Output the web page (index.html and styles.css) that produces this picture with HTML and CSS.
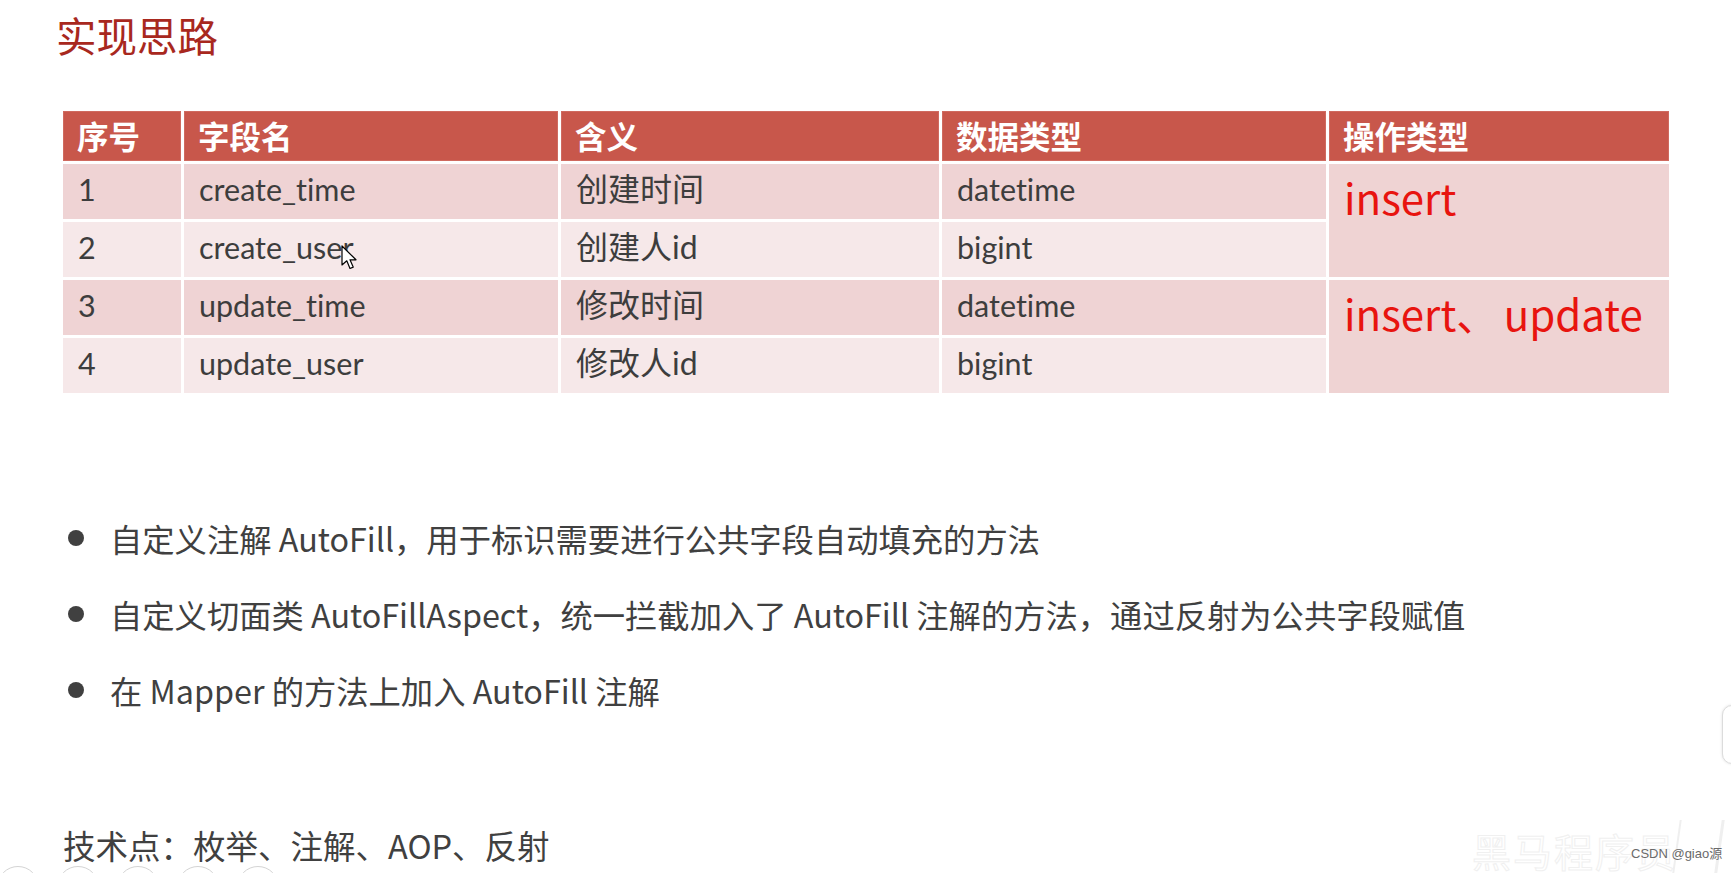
FILE: index.html
```html
<!DOCTYPE html>
<html lang="zh-CN">
<head>
<meta charset="utf-8">
<title>实现思路</title>
<link rel="stylesheet" href="styles.css">
</head>
<body>
<div class="slide">
  <h1 class="title">实现思路</h1>

  <div class="table">
    <div class="th">序号</div>
    <div class="th">字段名</div>
    <div class="th">含义</div>
    <div class="th">数据类型</div>
    <div class="th">操作类型</div>

    <div class="td odd">1</div>
    <div class="td odd">create_time</div>
    <div class="td odd cn">创建时间</div>
    <div class="td odd">datetime</div>
    <div class="td op op1">insert</div>

    <div class="td even">2</div>
    <div class="td even">create_user</div>
    <div class="td even cn">创建人id</div>
    <div class="td even">bigint</div>

    <div class="td odd">3</div>
    <div class="td odd">update_time</div>
    <div class="td odd cn">修改时间</div>
    <div class="td odd">datetime</div>
    <div class="td op op2">insert、 update</div>

    <div class="td even">4</div>
    <div class="td even">update_user</div>
    <div class="td even cn">修改人id</div>
    <div class="td even">bigint</div>
  </div>

  <ul class="points">
    <li><span class="dot"></span><span>自定义注解 AutoFill，用于标识需要进行公共字段自动填充的方法</span></li>
    <li><span class="dot"></span><span>自定义切面类 AutoFillAspect，统一拦截加入了 AutoFill 注解的方法，通过反射为公共字段赋值</span></li>
    <li><span class="dot"></span><span>在 Mapper 的方法上加入 AutoFill 注解</span></li>
  </ul>

  <p class="tech">技术点：枚举、注解、AOP、反射</p>
</div>

<svg class="cursor" width="18" height="28" viewBox="0 0 18 28" aria-hidden="true">
  <path d="M1 1 L1 20 L5.8 15.8 L9 23.5 L12.2 22.1 L9 14.8 L15 14.8 Z" fill="#fff" stroke="#000" stroke-width="1.2" stroke-linejoin="round"/>
</svg>

<div class="side-btn"></div>

<div class="controls">
  <span class="ctl c1"></span>
  <span class="ctl c2"></span>
  <span class="ctl c3"></span>
  <span class="ctl c4"></span>
  <span class="ctl c5"></span>
</div>

<div class="wm-logo">黑马程序员</div>
<div class="wm-lines"></div>
<div class="wm-csdn">CSDN @giao源</div>
</body>
</html>
```

FILE: styles.css
```css
html, body {
  margin: 0;
  padding: 0;
  background: #ffffff;
}

body {
  width: 1731px;
  height: 873px;
  overflow: hidden;
  position: relative;
  font-family: "Noto Sans CJK SC", "Noto Sans", sans-serif;
  color: #404040;
}

.slide {
  display: flex;
  flex-direction: column;
  padding-top: 10px;
}

.title {
  margin: 0 0 0 56px;
  font-size: 40.5px;
  line-height: 50px;
  font-weight: normal;
  color: #a8281e;
}

.table {
  margin: 51px 0 0 63px;
  width: 1606px;
  display: grid;
  grid-template-columns: 118px 374px 378px 384px 340px;
  grid-template-rows: 50px 55px 55px 55px 55px;
  gap: 3px;
}

.th {
  background: #c8574b;
  color: #ffffff;
  font-weight: bold;
  font-size: 31.5px;
  line-height: 48px;
  padding-left: 14px;
  box-shadow: inset 0 0 0 1px #cf6a5f;
}

.td {
  font-family: "Lato", "Noto Sans CJK SC", sans-serif;
  font-size: 30.5px;
  line-height: 50px;
  padding-left: 15px;
  color: #3d3d3d;
  font-variant-ligatures: none;
}

.td.cn {
  font-size: 32px;
  line-height: 50px;
}

.td.odd {
  background: #efd3d4;
}

.td.even {
  background: #f6e8e9;
}

.td.op {
  font-family: "Noto Sans CJK SC", sans-serif;
  background: #efd3d3;
  color: #e8140f;
  font-size: 42px;
  line-height: 58px;
  padding-top: 4px;
  grid-column: 5;
  word-spacing: -4px;
}

.td.op1 {
  grid-row: 2 / span 2;
}

.td.op2 {
  grid-row: 4 / span 2;
}

.points {
  list-style: none;
  margin: 107px 0 0 0;
  padding: 0 0 0 68px;
  display: flex;
  flex-direction: column;
}

.points li {
  display: flex;
  align-items: center;
  gap: 26px;
  height: 76px;
  font-size: 32.3px;
  color: #404040;
}

.dot {
  flex: none;
  width: 16px;
  height: 16px;
  border-radius: 50%;
  background: #404040;
}

.tech {
  margin: 93px 0 0 63px;
  font-size: 32.5px;
  line-height: 48px;
  color: #404040;
}

/* overlays */
.cursor {
  position: absolute;
  left: 341px;
  top: 245px;
}

.side-btn {
  position: absolute;
  left: 1722px;
  top: 705px;
  width: 40px;
  height: 57px;
  border: 1px solid #dcdcdc;
  border-radius: 10px;
  background: #ffffff;
  box-shadow: 0 0 3px rgba(0, 0, 0, 0.12);
}

.controls {
  position: absolute;
  left: 0;
  top: 866px;
  display: flex;
  gap: 18px;
}

.ctl {
  width: 40px;
  height: 40px;
  border: 1.5px solid #d4d4d4;
  border-radius: 50%;
  background: #ffffff;
}

.c1 { margin-left: -3px; }

.wm-logo {
  position: absolute;
  left: 1472px;
  top: 829px;
  font-size: 39px;
  line-height: 42px;
  letter-spacing: 2px;
  color: transparent;
  -webkit-text-stroke: 1px #f0f0f0;
  font-family: "Noto Sans CJK SC", sans-serif;
}

.wm-lines {
  position: absolute;
  left: 1676px;
  top: 820px;
  width: 40px;
  height: 53px;
  border-left: 2px solid #efefef;
  border-right: 3px solid #efefef;
  transform: skewX(-8deg);
}

.wm-csdn {
  position: absolute;
  left: 1631px;
  top: 846px;
  font-family: "Liberation Sans", "Noto Sans CJK SC", sans-serif;
  font-size: 13px;
  line-height: 16px;
  color: #6a6a6a;
  text-shadow: 0 0 2px #ffffff;
}
```
